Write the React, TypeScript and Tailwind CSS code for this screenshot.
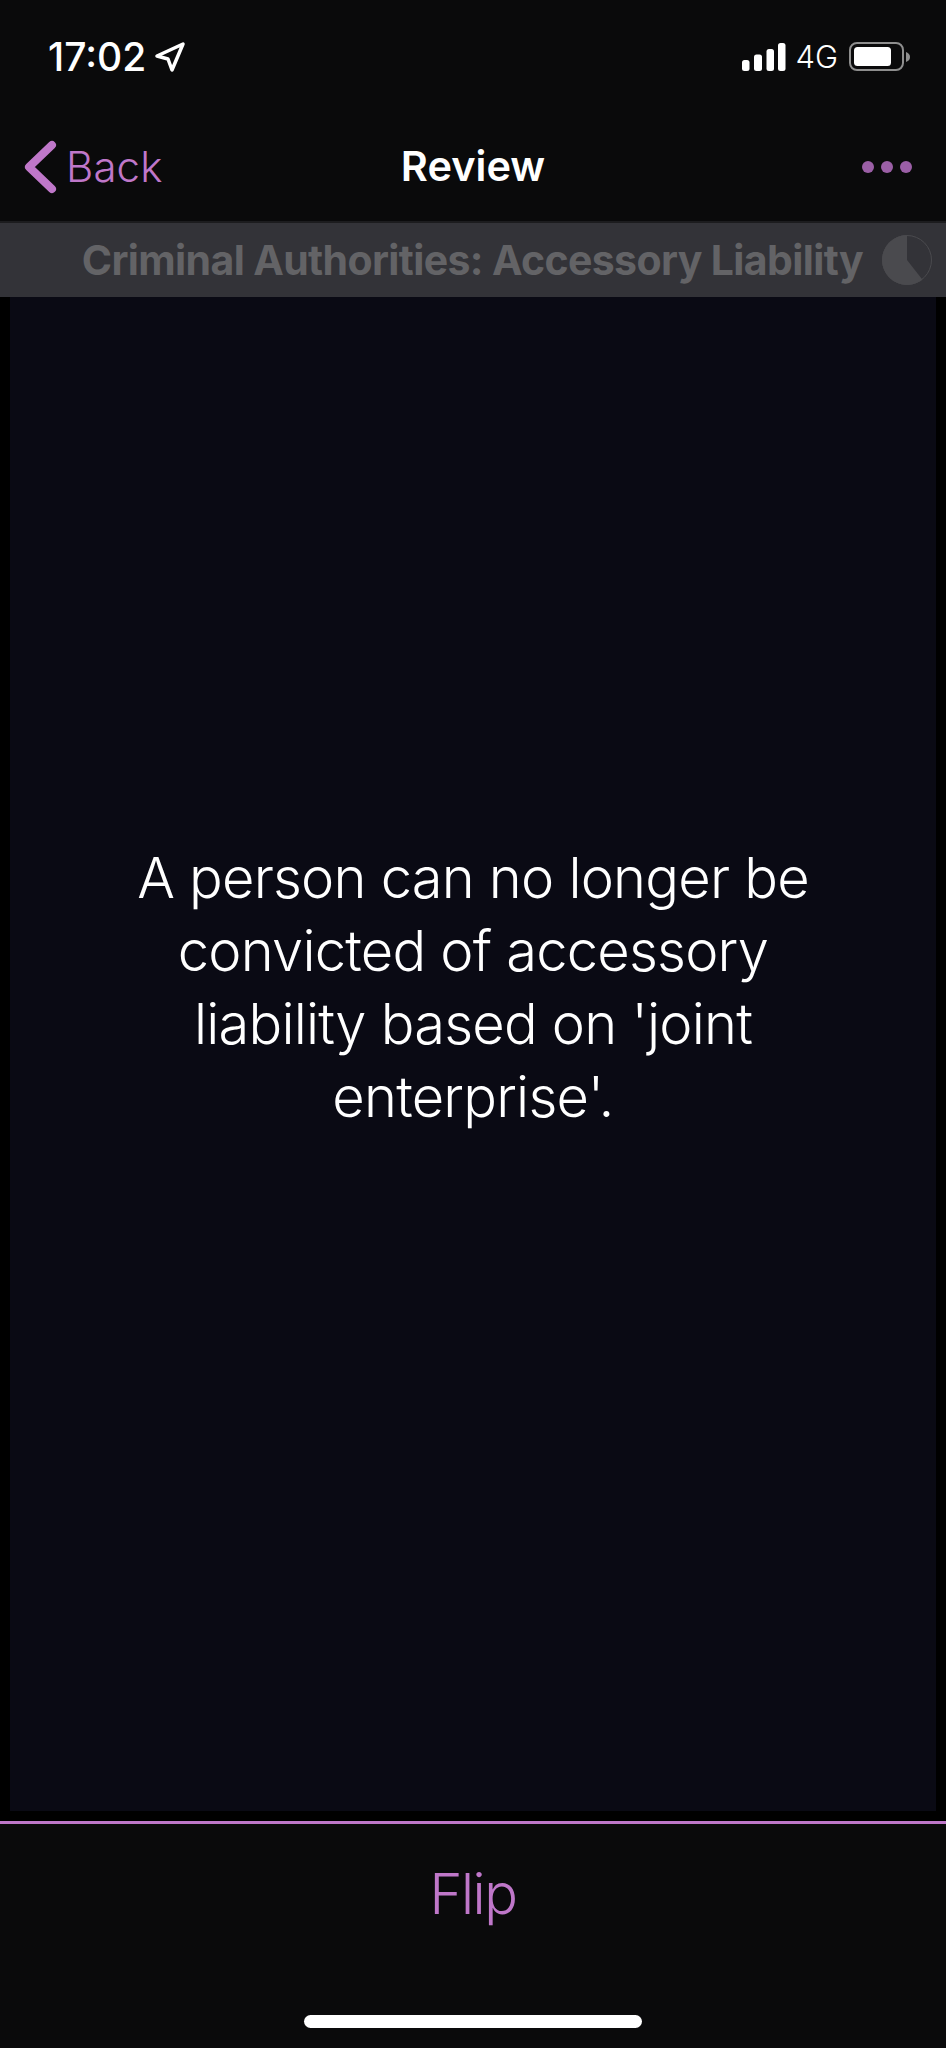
import React from "react";

const font = { fontFamily: "Inter, 'Liberation Sans', sans-serif" };

function Signal() {
  return (
    <svg width="45" height="30" viewBox="0 0 45 30" fill="#fff">
      <rect x="1" y="18" width="7.5" height="11" rx="2.5" />
      <rect x="13" y="12.5" width="8" height="16.5" rx="2.5" />
      <rect x="25.5" y="7" width="7.5" height="22" rx="2.5" />
      <rect x="37" y="1" width="7.5" height="28" rx="2.5" />
    </svg>
  );
}

function Battery() {
  return (
    <svg width="62" height="30" viewBox="0 0 62 30">
      <rect x="1" y="1" width="53" height="27" rx="7" fill="none" stroke="#8e8e8e" strokeWidth="2" />
      <rect x="5" y="5" width="37" height="19" rx="3.5" fill="#fff" />
      <path d="M57 10 C60 11 61 13 61 15 C61 17 60 19 57 20 Z" fill="#8e8e8e" />
    </svg>
  );
}

function Pie() {
  return (
    <svg width="52" height="52" viewBox="0 0 52 52">
      <circle cx="26" cy="26" r="25" fill="#4a4a4e" />
      <path d="M26 26 L26 1 A25 25 0 0 1 41.7 46 Z" fill="#333338" />
      <circle cx="26" cy="26" r="24.5" fill="none" stroke="#4a4a4e" strokeWidth="1" />
    </svg>
  );
}

export default function App() {
  return (
    <div className="w-[946px] h-[2048px] flex flex-col bg-[#0a0a0b] overflow-hidden" style={font}>
      <div className="h-[114px] flex items-center justify-between pl-[48px] pr-[35px] pb-[1px] text-white">
        <div className="flex items-center gap-[8px]">
          <span className="text-[39px] font-medium leading-none">17:02</span>
          <svg width="32" height="32" viewBox="0 0 32 32" fill="none" stroke="#fff" strokeWidth="3.5" strokeLinejoin="round">
            <path d="M3 15 L29 3 L18 29 L14 18 Z" />
          </svg>
        </div>
        <div className="flex items-center">
          <Signal />
          <span className="text-[31px] font-[350] leading-none ml-[9px] mr-[11px]">4G</span>
          <Battery />
        </div>
      </div>

      <div className="h-[109px] flex items-center justify-between pl-[22px] pr-[34px] pb-[2px] border-b-2 border-[#1c1c1e] relative">
        <div className="flex items-center gap-[8px] text-[#bf77c9]">
          <svg width="36" height="54" viewBox="0 0 36 54" fill="none" stroke="#bf77c9" strokeWidth="8" strokeLinecap="round" strokeLinejoin="round">
            <path d="M30 5 L7 27 L30 49" />
          </svg>
          <span className="text-[42px] font-[350] tracking-[0.1px] leading-none">Back</span>
        </div>
        <span className="absolute left-0 right-0 text-center text-white text-[41.5px] font-semibold leading-none">Review</span>
        <div className="flex gap-[7px]">
          <span className="w-[12px] h-[12px] rounded-full bg-[#9b5fa6]" />
          <span className="w-[12px] h-[12px] rounded-full bg-[#9b5fa6]" />
          <span className="w-[12px] h-[12px] rounded-full bg-[#9b5fa6]" />
        </div>
      </div>

      <div className="h-[74px] flex items-center justify-end gap-[18px] pr-[13px] bg-[#333338]">
        <span className="text-[41px] tracking-[-0.63px] font-bold leading-none text-[#636366] whitespace-nowrap">Criminal Authorities: Accessory Liability</span>
        <Pie />
      </div>

      <div className="h-[1524px] bg-black px-[10px] pb-[10px] flex">
        <div className="flex-1 bg-[#0a0a14] flex items-center justify-center px-[100px] pb-[133px]">
          <p className="text-white text-[56px] font-[350] tracking-[-0.78px] leading-[73px] text-center">
            A person can no longer be convicted of accessory liability based on 'joint enterprise'.
          </p>
        </div>
      </div>

      <div className="flex-1 border-t-[3px] border-[#bf77c9] flex flex-col items-center">
        <div className="text-[#bf77c9] text-[56px] font-light tracking-[-1.4px] leading-none mt-[42px]">Flip</div>
        <div className="w-[338px] h-[13px] rounded-full bg-white mt-[93px]" />
      </div>
    </div>
  );
}
